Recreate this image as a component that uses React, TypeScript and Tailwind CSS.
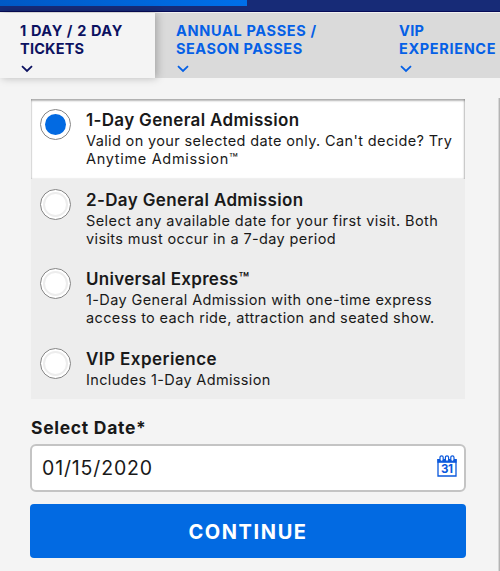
import { useState } from "react";
import { clsx } from "clsx";

interface Line {
  text: string;
  tracking: string;
}

interface Tab {
  width: string;
  lines: Line[];
}

interface Ticket {
  id: string;
  height: string;
  title: Line;
  details: Line[];
}

const tabs: Tab[] = [
  {
    width: "w-[155px] pl-5",
    lines: [
      { text: "1 DAY / 2 DAY", tracking: "tracking-[0.6px]" },
      { text: "TICKETS", tracking: "tracking-[0.2px]" },
    ],
  },
  {
    width: "w-[224px] pl-[21px]",
    lines: [
      { text: "ANNUAL PASSES /", tracking: "tracking-[0.67px]" },
      { text: "SEASON PASSES", tracking: "tracking-[0.5px]" },
    ],
  },
  {
    width: "w-[121px] pl-5",
    lines: [
      { text: "VIP", tracking: "tracking-[0.3px]" },
      { text: "EXPERIENCE", tracking: "tracking-[0.65px]" },
    ],
  },
];

const tickets: Ticket[] = [
  {
    id: "one-day",
    height: "h-[80px]",
    title: { text: "1-Day General Admission", tracking: "tracking-[0.33px]" },
    details: [
      { text: "Valid on your selected date only. Can't decide? Try", tracking: "tracking-[0.37px]" },
      { text: "Anytime Admission™", tracking: "tracking-[0.68px]" },
    ],
  },
  {
    id: "two-day",
    height: "h-[79px]",
    title: { text: "2-Day General Admission", tracking: "tracking-[0.36px]" },
    details: [
      { text: "Select any available date for your first visit. Both", tracking: "tracking-[0.43px]" },
      { text: "visits must occur in a 7-day period", tracking: "tracking-[0.38px]" },
    ],
  },
  {
    id: "express",
    height: "h-[80px]",
    title: { text: "Universal Express™", tracking: "tracking-[0.3px]" },
    details: [
      { text: "1-Day General Admission with one-time express", tracking: "tracking-[0.39px]" },
      { text: "access to each ride, attraction and seated show.", tracking: "tracking-[0.37px]" },
    ],
  },
  {
    id: "vip",
    height: "h-[61px]",
    title: { text: "VIP Experience", tracking: "tracking-[0.45px]" },
    details: [{ text: "Includes 1-Day Admission", tracking: "tracking-[0.35px]" }],
  },
];

const Chevron = () => (
  <svg className="mt-[7px] ml-px h-[8px] w-[12px]" viewBox="0 0 12 8" fill="none" stroke="currentColor" strokeWidth="1.8">
    <path d="M1 1.2 6 6l5-4.8" />
  </svg>
);

const CalendarIcon = () => (
  <svg className="h-[22px] w-[20px]" viewBox="0 0 20 22" fill="none" stroke="#0a58dc">
    <path d="M1 4v17h18V4" strokeWidth="1.3" />
    <path d="M.4 4h19.2v3.8H.4z" fill="#0a58dc" stroke="none" />
    <g fill="#fff" strokeWidth="1.2">
      <rect x="3" y=".8" width="3.2" height="5.6" rx="1.6" />
      <rect x="8.4" y=".8" width="3.2" height="5.6" rx="1.6" />
      <rect x="13.8" y=".8" width="3.2" height="5.6" rx="1.6" />
    </g>
    <text x="9.8" y="18.4" textAnchor="middle" fontSize="11.5" fontWeight="700" letterSpacing="-.3" fill="#0a58dc" stroke="none">
      31
    </text>
  </svg>
);

const Radio = ({ checked }: { checked: boolean }) => (
  <span className="flex size-[31px] shrink-0 items-center justify-center rounded-full border border-[#858585] bg-white">
    <span
      className={clsx(
        "rounded-full",
        checked ? "size-[21px] bg-[#026ae2]" : "size-[25px] border-2 border-[#ededed] bg-white"
      )}
    />
  </span>
);

export default function App() {
  const [activeTab, setActiveTab] = useState(0);
  const [selected, setSelected] = useState("one-day");

  return (
    <div className="h-[571px] w-[500px] overflow-hidden bg-[#f4f4f4] font-['Inter','Liberation_Sans',sans-serif] text-[#191919]">
      {/* Progress */}
      <div className="h-[12px] border-b border-[#080c57] bg-[#172b77]">
        <div className="h-[6px] w-[247px] bg-gradient-to-r from-[#0059c5] to-[#0070ea]" />
      </div>

      <nav className="flex h-[66px] border-t border-[#f0f0f0] bg-[#dadada]">
        {tabs.map((tab, i) => (
          <button
            key={tab.lines[0].text}
            onClick={() => setActiveTab(i)}
            className={clsx(
              "flex shrink-0 flex-col items-start pt-[9px] text-left text-[14.5px] leading-[18px] font-bold whitespace-nowrap",
              tab.width,
              i === activeTab ? "bg-[#f4f4f4] text-[#0c1261] shadow-[2px_0_8px_rgba(0,0,0,0.25)]" : "text-[#0560e6]"
            )}
          >
            {tab.lines.map((line) => (
              <span key={line.text} className={line.tracking}>
                {line.text}
              </span>
            ))}
            <Chevron />
          </button>
        ))}
      </nav>

      <div className="flex h-[493px]">
        <main className="w-[498px] pl-[30px]">
          {/* Ticket options */}
          <div className="mt-[21px] ml-px w-[434px] bg-[#ededed]">
            {tickets.map((ticket) => (
              <button
                key={ticket.id}
                onClick={() => setSelected(ticket.id)}
                className={clsx(
                  "flex w-full items-start pt-[10px] pl-[9px] text-left",
                  ticket.height,
                  ticket.id === selected && "bg-white shadow-[inset_0_2px_2px_rgba(0,0,0,0.28),inset_-1px_0_2px_rgba(0,0,0,0.2),inset_1px_0_1px_rgba(0,0,0,0.08)]"
                )}
              >
                <Radio checked={ticket.id === selected} />
                <span className="ml-[15px] flex flex-col items-start whitespace-nowrap">
                  <span className={clsx("text-[17px] leading-[22.5px] font-semibold", ticket.title.tracking)}>
                    {ticket.title.text}
                  </span>
                  {ticket.details.map((line) => (
                    <span key={line.text} className={clsx("text-[14.5px] leading-[18.5px]", line.tracking)}>
                      {line.text}
                    </span>
                  ))}
                </span>
              </button>
            ))}
          </div>

          <label className="mt-[17px] ml-px block h-[28px] text-[17.5px] leading-[24px] font-bold tracking-[0.7px]">
            Select Date*
          </label>
          <div className="flex h-[48px] w-[436px] items-center justify-between rounded-[6px] border-2 border-[#c4c4c4] bg-white pr-[7px] pl-[10px]">
            <span className="pt-[2px] text-[19.5px] tracking-[0.85px]">01/15/2020</span>
            <span className="-mt-[5px]">
              <CalendarIcon />
            </span>
          </div>
          <button className="mt-[12px] h-[54px] w-[436px] rounded-[4px] bg-[#026ae2] pt-[2px] text-[20px] font-bold tracking-[1.6px] text-white">
            CONTINUE
          </button>
        </main>
        <div className="mt-[20px] w-[2px] border-l border-[#d8d8d8] bg-[#b4b4b4]" />
      </div>
    </div>
  );
}
